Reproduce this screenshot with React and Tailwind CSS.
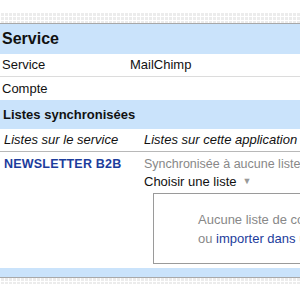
export default function App() {
  const pattern =
    "bg-[linear-gradient(90deg,#ffffff_1px,transparent_1px),linear-gradient(0deg,#ffffff_1px,transparent_1px)] bg-[length:4px_4px] bg-[#ececec]";
  return (
    <div
      className="w-[300px] h-[300px] overflow-hidden bg-white text-[13px] text-[#111]"
      style={{ fontFamily: '"Liberation Sans", Arial, sans-serif' }}
    >
      <div className="w-[420px]">
        <div className="h-[13px]" />
        <div className={`h-[10px] ${pattern}`} />
        <div className="border-t border-[#a8a8a8] bg-[#cae3fb] h-[31px] flex items-center px-[2px] text-[16px] font-bold">
          Service
        </div>
        <div className="flex h-[23px] items-center border-b border-[#dcdcdc]">
          <div className="w-[130px] shrink-0 pl-[2px]">Service</div>
          <div>MailChimp</div>
        </div>
        <div className="flex h-[23px] items-center">
          <div className="w-[130px] shrink-0 pl-[2px]">Compte</div>
          <div />
        </div>
        <div className="bg-[#cae3fb] h-[29px] flex items-center px-[3px] font-bold">
          Listes synchronisées
        </div>
        <div className="flex h-[23px] items-center italic border-b border-[#b8b8b8]">
          <div className="w-[144px] shrink-0 pl-[4px]">Listes sur le service</div>
          <div>Listes sur cette application</div>
        </div>
        <div className="flex">
          <div className="w-[144px] shrink-0 pl-[4px] pt-[3px] font-bold text-[12.5px] text-[#1c3c9c] tracking-[0.2px]">
            NEWSLETTER B2B
          </div>
          <div className="flex flex-col">
            <div className="pt-[3px] h-[20px] text-[#888] text-[12.5px] whitespace-nowrap">Synchronisée à aucune liste</div>
            <div className="h-[20px] flex items-center gap-[6px]">
              <span>Choisir une liste</span>
              <span className="text-[9px] text-[#999]">▼</span>
            </div>
            <div className="mt-[1px] ml-[9px] h-[71px] w-[280px] border border-[#9a9a9a] pl-[44px] pt-[16px] leading-[19px] text-[#888] whitespace-nowrap">
              <div>Aucune liste de contacts</div>
              <div>
                ou <span className="text-[#1c3c9c]">importer dans</span> une liste
              </div>
            </div>
          </div>
        </div>
        <div className="mt-[4px] h-[10px] bg-[#cae3fb] border-b border-[#a8a8a8]" />
        <div className={`h-[6px] ${pattern}`} />
      </div>
    </div>
  );
}
